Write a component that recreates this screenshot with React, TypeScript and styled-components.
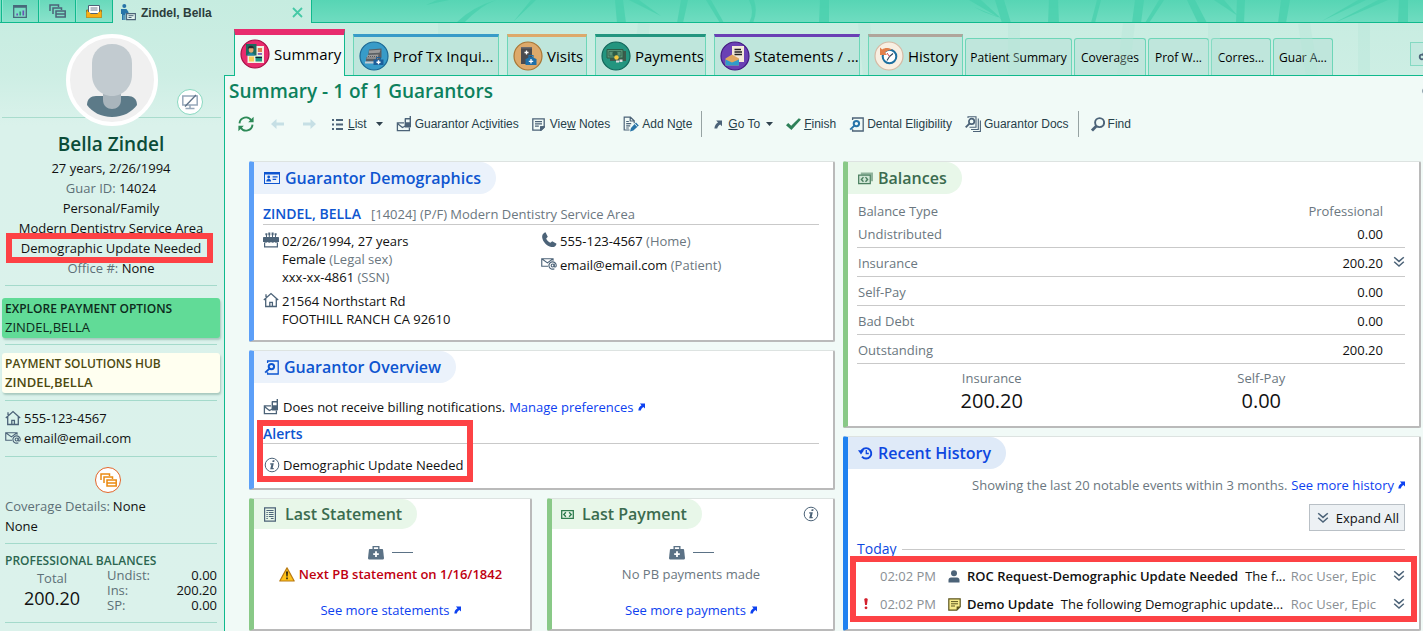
import React from "react";
import styled, { createGlobalStyle } from "styled-components";

const sans = `"Open Sans", "Noto Sans", sans-serif`;
const slate = "#4c6378";

const GlobalStyle = createGlobalStyle`
  *, *::before, *::after { box-sizing: border-box; }
  body { margin: 0; font-family: ${sans}; font-size: 13px; line-height: 18px; color: #111; overflow-x: hidden; background: #dbf2eb; }
  button { font: inherit; color: inherit; background: none; border: 0; padding: 0; margin: 0; cursor: pointer; }
  a { color: #0d41f0; text-decoration: none; }
  h1, h2, h3, p, ul, dl, dd { margin: 0; padding: 0; }
  ul { list-style: none; }
  svg { display: block; flex: none; }
`;

/* ---------- shell ---------- */

const Shell = styled.div`
  display: flex;
  flex-direction: column;
  min-height: 100vh;
  position: relative;
  isolation: isolate;
  overflow: hidden;
  background: linear-gradient(#c6ece0 0, #cdeee4 75px, #daf2eb 125px, #dbf2eb 100%);
`;

const TopBar = styled.header`
  display: flex;
  height: 23px;
`;

const AppTab = styled.button`
  width: 37px;
  height: 23px;
  display: flex;
  align-items: center;
  justify-content: center;
  background: linear-gradient(#68d9bb, #8ae2cb);
  border-right: 1px solid #10b98d;
  border-bottom: 1px solid #10b98d;
  box-shadow: inset 1px 0 0 #8fe6d0;
`;

const EdgeSliver = styled.div`
  width: 2px;
  background: #79ddc2;
  border-right: 1px solid #10b98d;
  border-bottom: 1px solid #10b98d;
`;

const PersonTab = styled.div`
  width: 198px;
  display: flex;
  align-items: center;
  gap: 5px;
  padding: 2px 8px 0 8px;
  font-family: "Liberation Sans", Arial, sans-serif;
  font-size: 12px;
  font-weight: bold;
  color: #2c3d3c;
`;

const CloseButton = styled.button`
  margin-left: auto;
`;

const TopFill = styled.div`
  flex: 1;
  position: relative;
  overflow: hidden;
  background: linear-gradient(#57d5b4, #6fdcc0);
  border-left: 1px solid #10b98d;
  border-bottom: 1px solid #10b98d;
`;

const Art = styled.svg`
  position: absolute;
  top: 0;
  right: 0;
`;

const Body = styled.div`
  flex: 1;
  display: flex;
`;

/* ---------- sidebar ---------- */

const Sidebar = styled.aside`
  width: 224px;
  flex: none;
  padding: 11px 7px 8px 5px;
`;

const AvatarRow = styled.div`
  position: relative;
  display: flex;
  justify-content: center;
  margin: 0 -4px 4px -3px;
  &::before {
    content: "";
    position: absolute;
    left: 0;
    right: 0;
    top: 83px;
    border-top: 1px solid #a9dccd;
  }
`;

const Avatar = styled.div`
  position: relative;
  width: 92px;
  height: 92px;
  border-radius: 50%;
  border: 4px solid #fff;
  background: #f0f0f0;
  overflow: hidden;
`;

const NoPhoto = styled.button`
  position: absolute;
  right: 18px;
  top: 55px;
  width: 26px;
  height: 26px;
  border-radius: 50%;
  border: 1px solid #8ad9c1;
  background: #fff;
  display: flex;
  align-items: center;
  justify-content: center;
`;

const PersonName = styled.h1`
  font-size: 19px;
  line-height: 28px;
  font-weight: 600;
  text-align: center;
  color: #0b4c38;
`;

const PersonFacts = styled.div`
  text-align: center;
  line-height: 20px;
  white-space: nowrap;
`;

const Muted = styled.span`
  color: #5d7077;
`;

const Divider = styled.hr<{ $top: number; $bottom: number }>`
  border: 0;
  border-top: 1px solid #a4dacb;
  margin: ${(p) => p.$top}px 0 ${(p) => p.$bottom}px;
`;

const ActionTile = styled.button<{ $tone: "green" | "cream" }>`
  display: block;
  width: calc(100% + 6px);
  margin: 0 -3px;
  padding: 1px 3px;
  text-align: left;
  line-height: 19px;
  border-radius: 3px;
  background: ${(p) => (p.$tone === "green" ? "#61db97" : "#fffff0")};
  color: ${(p) => (p.$tone === "green" ? "#0d2a1c" : "#4d4a10")};
  box-shadow: 1px 2px 2px #a9c9bf;
  font-size: 13px;
  font-weight: ${(p) => (p.$tone === "green" ? 400 : 600)};
`;

const TileCaption = styled.span`
  display: block;
  font-size: 12px;
  font-weight: 600;
`;

const ContactRow = styled.div`
  display: flex;
  align-items: center;
  gap: 3px;
  line-height: 20px;
`;

const CoverageBadge = styled.div`
  width: 26px;
  height: 26px;
  margin: 0 0 3px 90px;
  border: 1px solid #e2662a;
  border-radius: 50%;
  background: #fff;
  display: flex;
  align-items: center;
  justify-content: center;
`;

const SideHeading = styled.h2`
  font-size: 12px;
  line-height: 14px;
  font-weight: 600;
  color: #2b6650;
`;

const SideBalances = styled.div`
  display: flex;
  gap: 8px;
`;

const SideTotal = styled.div`
  width: 94px;
  text-align: center;
  line-height: 20px;
  color: #5d7077;
  strong { display: block; font-size: 18px; font-weight: 400; color: #111; }
`;

const SideLines = styled.dl`
  flex: 1;
  display: grid;
  grid-template-columns: auto auto;
  justify-content: space-between;
  line-height: 15px;
  dt { color: #5d7077; }
  dd { text-align: right; }
`;

/* ---------- main ---------- */

const Main = styled.main`
  flex: 1;
  min-width: 0;
  display: flex;
  flex-direction: column;
`;

const TabStrip = styled.nav`
  position: relative;
  display: flex;
  align-items: flex-end;
  height: 53px;
  padding-left: 10px;
  &::after {
    content: "";
    position: absolute;
    left: 0;
    right: 0;
    bottom: 0;
    border-bottom: 1px solid #10b98d;
  }
`;

const BigTab = styled.button<{ $color: string; $width: number; $active?: boolean }>`
  position: relative;
  z-index: ${(p) => (p.$active ? 1 : 0)};
  flex: none;
  width: ${(p) => p.$width}px;
  height: ${(p) => (p.$active ? 47 : 42)}px;
  padding: ${(p) => (p.$active ? "0 0 3px" : "2px 0 3px")};
  padding-left: 5px;
  display: flex;
  align-items: center;
  gap: 4px;
  white-space: nowrap;
  font-size: 15px;
  font-weight: 500;
  color: #000;
  background: ${(p) => (p.$active ? "#f1faf7" : "#bfe6dc")};
  border: 1px solid ${(p) => (p.$active ? "#10b98d" : "#6dd6b8")};
  border-bottom: 0;
  border-top: ${(p) => (p.$active ? 6 : 3)}px solid ${(p) => p.$color};
`;

const BigTabs = styled.div`
  display: flex;
  align-items: flex-end;
  gap: 8px;
`;

const SmallTabs = styled.div`
  display: flex;
  gap: 2px;
  padding-left: 2px;
`;

const SmallTab = styled.button<{ $width: number }>`
  flex: none;
  width: ${(p) => p.$width}px;
  height: 38px;
  white-space: nowrap;
  font-size: 12px;
  color: #000;
  background: #bfe6dc;
  border: 1px solid #6dd6b8;
  border-bottom: 0;
  border-radius: 3px 3px 0 0;
`;

const TabSpacer = styled.div`
  flex: 1;
`;

const ToolTab = styled.button`
  flex: none;
  width: 24px;
  height: 24px;
  margin-right: -11px;
  margin-bottom: 10px;
  padding-left: 7px;
  border: 1px solid #84d9c2;
  background: #c3e9df;
`;

const Page = styled.section`
  flex: 1;
  display: flex;
  flex-direction: column;
  border-left: 1px solid #10b98d;
  background: #f1faf7;
`;

const PageHead = styled.div`
  display: flex;
  align-items: center;
  justify-content: space-between;
  padding: 0 0 0 4px;
  margin-right: -11px;
  height: 30px;
`;

const PageTitle = styled.h1`
  font-size: 19px;
  line-height: 28px;
  font-weight: 600;
  color: #0d815d;
`;

const Toolbar = styled.div`
  display: flex;
  align-items: center;
  height: 36px;
  padding-left: 11px;
  gap: 13px;
  font-family: "Liberation Sans", Arial, sans-serif;
  font-size: 12px;
  color: #27404a;
  white-space: nowrap;
`;

const ToolButton = styled.button<{ $gap?: number }>`
  display: flex;
  align-items: center;
  gap: ${(p) => p.$gap ?? 3}px;
  height: 26px;
`;

const ListLabel = styled.span`
  margin-right: 4px;
`;

const ToolIcon = styled.button`
  width: 19px;
  height: 26px;
  display: flex;
  align-items: center;
  justify-content: center;
`;

const ToolRule = styled.span`
  width: 1px;
  height: 26px;
  margin: 0 -1px 0 -4px;
  background: #97a3a3;
`;

const Columns = styled.div`
  display: grid;
  grid-template-columns: 586fr 578fr;
  gap: 8px;
  flex: 1;
  padding: 19px 2px 0 24px;
`;

const Column = styled.div`
  display: flex;
  flex-direction: column;
  gap: 8px;
  min-width: 0;
`;

type Tone = "blue" | "green" | "royal";
const tones: Record<Tone, { edge: string; pill: string; text: string }> = {
  blue: { edge: "#5c9ff8", pill: "#ebf2fb", text: "#0e55d0" },
  green: { edge: "#89c987", pill: "#e8f7e9", text: "#3b6b4f" },
  royal: { edge: "#1f82f0", pill: "#dfeaf8", text: "#0d47e0" },
};

const Card = styled.section<{ $tone: Tone; $grow?: boolean }>`
  flex: ${(p) => (p.$grow ? 1 : "none")};
  min-width: 0;
  background: #fff;
  border: 1px solid #dde3e1;
  border-left: 5px solid ${(p) => tones[p.$tone].edge};
  border-right: 2px solid #bababa;
  border-bottom: 2px solid #bababa;
  border-radius: 2px;
`;

const CardHead = styled.div`
  display: flex;
  align-items: center;
  justify-content: space-between;
  padding-right: 14px;
`;

const CardTitle = styled.h2<{ $tone: Tone; $compact?: boolean }>`
  display: flex;
  align-items: center;
  gap: ${(p) => (p.$compact ? 8 : 5)}px;
  height: ${(p) => (p.$compact ? 30 : 32)}px;
  padding: 0 15px 0 ${(p) => (p.$compact ? 9 : 10)}px;
  border-radius: 0 16px 16px 0;
  background: ${(p) => tones[p.$tone].pill};
  color: ${(p) => tones[p.$tone].text};
  font-size: 16px;
  line-height: 24px;
  font-weight: 600;
  white-space: nowrap;
`;

const CardBody = styled.div<{ $bottom: number }>`
  padding: 0 14px ${(p) => p.$bottom}px 9px;
`;

const Grey = styled.span`
  color: #6b7780;
`;

const AccountLine = styled.div`
  display: flex;
  align-items: baseline;
  gap: 10px;
  margin-top: 10px;
  line-height: 19px;
  border-bottom: 1px solid #c9c9c9;
  strong { font-size: 14px; font-weight: 600; color: #0e55d0; }
`;

const FactGrid = styled.div`
  display: grid;
  grid-template-columns: 1fr 1fr;
  margin-top: 7px;
`;

const FactList = styled.div`
  display: flex;
  flex-direction: column;
  gap: 6px;
`;

const Fact = styled.div`
  display: flex;
  gap: 3px;
`;

const Preference = styled.p`
  display: flex;
  align-items: center;
  gap: 4px;
  margin-top: 15px;
`;

const JumpLink = styled.a`
  display: inline-flex;
  align-items: center;
  gap: 4px;
  white-space: nowrap;
`;

const AlertsBlock = styled.div`
  position: relative;
  margin-top: 9px;
`;

const AlertsTitle = styled.h3`
  font-size: 14px;
  line-height: 18px;
  font-weight: 600;
  color: #0e55d0;
  border-bottom: 1px solid #c9c9c9;
`;

const AlertItem = styled.p`
  display: flex;
  align-items: center;
  gap: 3px;
  margin-top: 12px;
  padding-left: 1px;
`;

/* Red attention frame laid over the content it surrounds */
const Callout = styled.span<{ $inset: string; $width?: string }>`
  position: absolute;
  inset: ${(p) => p.$inset};
  width: ${(p) => p.$width ?? "auto"};
  border: 6px solid #fd4245;
  pointer-events: none;
`;

const Flagged = styled.div`
  position: relative;
`;

const Pair = styled.div`
  display: grid;
  grid-template-columns: 283fr 288fr;
  gap: 15px;
  flex: 1;
`;

const Centered = styled.div`
  display: flex;
  flex-direction: column;
  align-items: center;
  padding: 14px 12px 7px 9px;
`;

const BagLine = styled.div`
  display: flex;
  align-items: center;
  gap: 8px;
  height: 18px;
  margin-bottom: 4px;
  &::after { content: ""; width: 21px; border-top: 1px solid #5b7286; }
`;

const StatusLine = styled.p<{ $warn?: boolean }>`
  display: flex;
  align-items: center;
  gap: 4px;
  margin-bottom: 18px;
  white-space: nowrap;
  font-weight: ${(p) => (p.$warn ? 600 : 400)};
  color: ${(p) => (p.$warn ? "#c00010" : "#6b7780")};
`;

const BalanceTable = styled.table`
  width: 100%;
  margin-top: 5px;
  border-collapse: collapse;
  line-height: 18px;
  th, td { padding: 6px 0 4px; font-weight: 400; text-align: left; color: #6b7780; }
  tbody th { padding-left: 1px; }
  thead th { padding: 3px 0 2px 1px; }
  tbody tr { border-bottom: 1px solid #c9c9c9; }
  tbody tr:first-child th, tbody tr:first-child td { padding-top: 3px; }
  tbody td { color: #111; }
  th:nth-child(2), td:nth-child(2) { text-align: right; }
  th:nth-child(3), td:nth-child(3) { width: 22px; padding-left: 10px; }
`;

const Totals = styled.dl`
  display: grid;
  grid-template-columns: 1fr 1fr;
  padding: 5px 9px 11px 0;
  text-align: center;
  dt { color: #6b7780; }
  dd { font-size: 20px; line-height: 28px; }
`;

const HistoryNote = styled.p`
  display: flex;
  justify-content: flex-end;
  gap: 4px;
  margin-top: 7px;
  white-space: nowrap;
`;

const ExpandRow = styled.div`
  display: flex;
  justify-content: flex-end;
  margin-top: 10px;
`;

const ExpandButton = styled.button`
  display: flex;
  align-items: center;
  gap: 7px;
  height: 27px;
  padding: 0 5px 0 7px;
  border: 1px solid #b9c0c6;
  background: #edf1f4;
`;

const DayHeading = styled.h3`
  display: flex;
  align-items: center;
  gap: 5px;
  margin-top: 8px;
  font-size: 14px;
  line-height: 20px;
  font-weight: 400;
  color: #0d47e0;
  &::after { content: ""; flex: 1; border-top: 1px solid #c9c9c9; }
`;

const EventList = styled.ul`
  position: relative;
  margin-top: 3px;
`;

const EventRow = styled.li`
  display: flex;
  align-items: center;
  height: 28px;
  white-space: nowrap;
`;

const EventFlag = styled.span`
  width: 23px;
  padding-left: 6px;
`;

const EventTime = styled.time`
  width: 68px;
  color: #8a8f94;
`;

const EventIcon = styled.span`
  width: 19px;
`;

const EventTitle = styled.strong`
  font-weight: 600;
  margin-right: 7px;
`;

const EventDetail = styled.span`
  flex: 1;
`;

const EventUser = styled.span`
  margin-right: 17px;
  color: #8a8f94;
`;

/* ---------- icons ---------- */

type IconColor = { color?: string };

const HouseIcon = () => (
  <svg width="16" height="16" viewBox="0 0 16 16" fill="none" stroke={slate} strokeWidth="1.3">
    <path d="M.8 8 8 1.6 15.2 8M2.7 6.5v8h10.6v-8M3 5V2.2M6.8 14.5v-4.2h2.6v4.2" />
  </svg>
);

const MailAtIcon = () => (
  <svg width="16" height="16" viewBox="0 0 17 16" fill="none" stroke={slate} strokeWidth="1.2">
    <path d="M7.5 10.4H.8v-8h12v2.2M.8 2.5l6 4.3 6-4.3" />
    <circle cx="12.4" cy="9.6" r="1.6" />
    <path d="M14 7.8v2.4c0 1.6 2.2 1.3 2.2-.6a3.9 3.9 0 1 0-2 3.4" />
  </svg>
);

const CakeIcon = () => (
  <svg width="16" height="16" viewBox="0 0 16 16" fill={slate}>
    <path d="M2.4 1.2h2v2h-2zM5.3.6h2v2.6h-2zM8.6.6h2v2.6h-2zM11.6 1.2h2v2h-2zM3 3.2h1v2.3H3zM5.8 3.2h1v2.3h-1zM9 3.2h1v2.3H9zM12 3.2h1v2.3h-1zM0 6c0-.6.4-1 1-1h14c.6 0 1 .4 1 1v4h-1.4c-1 1-2.2 1-3.2 0-1 1-2.4 1-3.4 0-1 1-2.4 1-3.4 0-1 1-2.3 1-3.2 0H0z" />
    <path d="M1.6 10.5v4.3h12.8v-4.3" fill="none" stroke={slate} strokeWidth="1.2" />
  </svg>
);

const PhoneIcon = () => (
  <svg width="16" height="16" viewBox="0 0 16 16">
    <path fill={slate} d="M4.6.6 6.8 4.8 5.2 6.6c.8 2 2.2 3.4 4.2 4.2l1.8-1.600 4 2.200c.3.2.3.5.2.8-.7 2.200-2.800 3.200-5 2.800C5.600 14.200 1.800 9.800 1.200 5.600.9 3.400 1.800 1.300 3.800.4c.3-.1.6-.1.8.2z" />
  </svg>
);

const IdCardIcon = () => (
  <svg width="16" height="12" viewBox="0 0 16 12">
    <path fill="#0e55d0" fillRule="evenodd" d="M0 0h16v12H0zM1 2.6v8.3h14V2.6z" />
    <circle cx="4.7" cy="5" r="1.4" fill="#0e55d0" />
    <path fill="#0e55d0" d="M2.3 9.5c0-3.6 4.8-3.6 4.8 0zM8.6 4.2h5v1.2h-5zM8.6 6.8h3.6V8H8.6z" />
  </svg>
);

const DocSearchIcon = ({ color = slate, lens = color }: IconColor & { lens?: string }) => (
  <svg width="15" height="15" viewBox="0 0 15 15" fill="none">
    <path d="M3.6 3V1h10.6v13H3.6v-1.8" stroke={color} strokeWidth="1.3" />
    <circle cx="7.4" cy="6.6" r="2.7" stroke={lens} strokeWidth="2" />
    <path d="M5.4 8.6 1.2 12.6" stroke={lens} strokeWidth="2" />
  </svg>
);

const NotifyIcon = () => (
  <svg width="16" height="16" viewBox="0 0 16 16" fill="none">
    <path d="M8 6.8H1.4v7.8h12v-3M1.4 7.6l5 4 3-1.6" stroke={slate} strokeWidth="1.3" />
    <path fill={slate} d="M13.6 0H15v10.4c0 .6-.4 1-1 1H9.6c-.6 0-1-.4-1-1V3c0-.6.4-1 1-1h4zM10 3.4v2.8h3.6V3.4z" fillRule="evenodd" />
  </svg>
);

const InfoIcon = () => (
  <svg width="16" height="16" viewBox="0 0 16 16" fill="none">
    <circle cx="8" cy="8" r="6.8" stroke={slate} strokeWidth="1" />
    <path d="M8.7 3.2h1.9l-.4 1.8H8.3zM6.3 6.2h3.5l-1.1 4.9h1.1l-.2 1.2H6.2l1.2-4.9H6z" fill={slate} />
  </svg>
);

const JumpIcon = ({ color = "#0d41f0", size = 7 }: IconColor & { size?: number }) => (
  <svg width={size} height={size + 1} viewBox="0 0 8 9">
    <path fill={color} d="M2.2.6H8v5.6L6.2 4.5C4.6 5.4 3.7 6.6 3.2 8.6H.4C.5 5.6 1.9 3.6 4 2.4z" />
  </svg>
);

const ChevronsIcon = () => (
  <svg width="12" height="12" viewBox="0 0 12 12" fill="none" stroke={slate} strokeWidth="1.5">
    <path d="M1.2 1.2 6 5.4l4.8-4.2M1.2 5.8 6 10l4.8-4.2" />
  </svg>
);

const StatementIcon = () => (
  <svg width="14" height="15" viewBox="0 0 14 15" fill="none">
    <path d="M1.6.8h10.8v13.4H1.6z" stroke={slate} strokeWidth="1.2" />
    <path d="M3.4 3.5h7.2M3.4 5.5h1.4m1 0h4.8M3.4 7.5h1.4m1 0h4.8M3.4 9.5h1.4m1 0h4.8M3.4 11.5h1.4m3 0h2.8" stroke={slate} />
  </svg>
);

const CashIcon = () => (
  <svg width="13" height="9" viewBox="0 0 13 9" fill="none">
    <path d="M.7.7h11.6v7.6H.7z" stroke="#2f7d50" strokeWidth="1.3" />
    <path d="M4.9 2.3 2.8 4.5l2.1 2.2M8.1 2.3l2.1 2.2-2.1 2.2" stroke="#2f7d50" strokeWidth="1.4" />
  </svg>
);

const CashStackIcon = () => (
  <svg width="15" height="13" viewBox="0 0 16 13" fill="none">
    <path d="M3 0h13v9.5h-2.2V2.4H3z" fill="#8fb39c" />
    <path d="M.7 3h12.4v9H.7z" fill="#cfe6d5" stroke="#4b7f60" strokeWidth="1.3" />
    <path d="M5.8 5 3.6 7.5 5.8 10M8 5l2.2 2.5L8 10" stroke="#4b7f60" strokeWidth="1.5" />
  </svg>
);

const BagIcon = () => (
  <svg width="16" height="15" viewBox="0 0 16 15">
    <path d="M5.2 4.5V1.6h5.6v2.9" fill="none" stroke="#5b7286" strokeWidth="1.4" />
    <path d="M2 4h12c.7 0 1 .4 1.1 1L16 13c0 .8-.4 1.4-1 1.4H1C.4 14.4 0 13.8 0 13l.9-8C1 4.4 1.3 4 2 4z" fill="#5b7286" />
    <path d="M8 6.3v5.6M5.2 9.1h5.6" stroke="#fff" strokeWidth="1.8" />
  </svg>
);

const WarningIcon = () => (
  <svg width="16" height="15" viewBox="0 0 16 15">
    <path d="M8 .9 15.2 14H.8z" fill="#ffc21a" stroke="#b97a12" strokeWidth="1.2" strokeLinejoin="round" />
    <path d="M7 4.5h2l-.4 5H7.4zM7.2 10.5h1.6v1.7H7.2z" fill="#2b2410" />
  </svg>
);

const HistoryIcon = () => (
  <svg width="15" height="14" viewBox="0 0 15 14" fill="none" stroke="#0d47e0">
    <path d="M3 6.2A5.2 5.2 0 1 1 4 10.6" strokeWidth="1.9" />
    <path d="M0 4.2h6L3 8.4z" fill="#0d47e0" stroke="none" />
    <path d="M8.3 4v3.5h2.5" strokeWidth="1.3" />
  </svg>
);

const PersonIcon = () => (
  <svg width="12" height="13" viewBox="0 0 12 13" fill={slate}>
    <circle cx="6" cy="3.3" r="3" />
    <path d="M.5 12.6V10c0-1.5 1-2.6 2.5-2.6h6c1.5 0 2.5 1.1 2.5 2.6v2.6z" />
  </svg>
);

const StickyIcon = () => (
  <svg width="13" height="13" viewBox="0 0 13 13" fill="none">
    <path d="M.8.8h11.4v8L8.8 12.2h-8z" fill="#f8ec8d" stroke="#5c5620" strokeWidth="1.2" />
    <path d="M12.2 8.6H8.6v3.6z" fill="#5c5620" />
    <path d="M3 3.6h7M3 5.8h7M3 8h4" stroke="#5c5620" />
  </svg>
);

const ExclaimIcon = () => (
  <svg width="6" height="12" viewBox="0 0 6 12" fill="#d31f2c">
    <path d="M1.3 1.5c0-1.7 3.4-1.7 3.4 0L3.9 7H2.1z" />
    <circle cx="3" cy="9.8" r="1.4" />
  </svg>
);

const RefreshIcon = () => (
  <svg width="16" height="16" viewBox="0 0 16 16" fill="none" stroke="#2d8a57" strokeWidth="1.9">
    <path d="M1.5 7.4A6.4 6.4 0 0 1 13.4 4.6M14.5 8.6A6.4 6.4 0 0 1 2.6 11.4" />
    <path d="M15.6.8v5.4h-5.4zM.4 15.2V9.8h5.4z" fill="#2d8a57" stroke="none" />
  </svg>
);

const ArrowIcon = ({ flip }: { flip?: boolean }) => (
  <svg width="13" height="10" viewBox="0 0 13 10">
    <path d={flip ? "M13 5 7.5 0v3.4H0v3.2h7.5V10z" : "M0 5 5.5 0v3.4H13v3.2H5.5V10z"} fill="#c6dfe5" />
  </svg>
);

const ListIcon = () => (
  <svg width="11" height="11" viewBox="0 0 11 11" fill={slate}>
    <path d="M0 0h2v2H0zM4 0h7v2H4zM0 4.5h2v2H0zM4 4.5h7v2H4zM0 9h2v2H0zM4 9h7v2H4z" />
  </svg>
);

const CaretIcon = () => (
  <svg width="7" height="4" viewBox="0 0 7 4">
    <path d="M0 0h7L3.5 4z" fill="#30424e" />
  </svg>
);

const NoteIcon = () => (
  <svg width="13" height="13" viewBox="0 0 13 13" fill="none" stroke={slate} strokeWidth="1.3">
    <path d="M.8.8h11.4v8.4l-3 3H.8zM12 8.8H8.8V12M3 3.6h7M3 5.9h7M3 8.2h3.8" />
    <path d="M12.2 8.8H8.8v3.4z" fill={slate} />
  </svg>
);

const AddNoteIcon = () => (
  <svg width="16" height="16" viewBox="0 0 16 16" fill="none">
    <path d="M6.5 14H1.2V1.2h6.2l3.8 3.6v2.4M7.2 1.4V5h3.8M3.2 5.5h2.6M3.2 7.7h5M3.2 9.9h4M3.2 12h2.6" stroke={slate} strokeWidth="1.2" />
    <path d="M13 6.6 15.8 9.4 10.4 14.6 7 15.6 8 12z" fill="#2874a8" />
    <path d="m11.6 7.8 2.9 2.9" stroke="#f1faf7" />
  </svg>
);

const CheckIcon = () => (
  <svg width="15" height="12" viewBox="0 0 15 12">
    <path d="M0 7.2 2.2 5 5.2 7.8 12.8.2 15 1.6 5.4 12z" fill="#2d8058" />
  </svg>
);

const DocsIcon = () => (
  <svg width="16" height="16" viewBox="0 0 16 16" fill="none" stroke={slate}>
    <path d="M3 2V.8h8v10.4H4.5M13.3 2.5v11H6M15.4 4.5v11H8" strokeWidth="1.1" />
    <circle cx="6.6" cy="5.4" r="2.7" strokeWidth="1.7" />
    <path d="M4.7 7.3.7 11.3" strokeWidth="1.9" />
  </svg>
);

const FindIcon = () => (
  <svg width="14" height="15" viewBox="0 0 14 15" fill="none" stroke={slate}>
    <circle cx="8.6" cy="5.6" r="4.5" strokeWidth="1.9" />
    <path d="M5.4 9 1 13.6" strokeWidth="2.8" />
  </svg>
);

const CopiesIcon = ({ color = slate }: IconColor) => (
  <svg width="17" height="14" viewBox="0 0 17 14" fill="none" stroke={color} strokeWidth="1.5">
    <path d="M1 7V1h8.5v2M4 10V4h8.5v2M7 7h9.2v6H7zM7 9.900h9" />
  </svg>
);

const ChartIcon = () => (
  <svg width="14" height="13" viewBox="0 0 14 13" fill="none">
    <path d="M.7.7h12.6v11.6H.7zM.7 2h12.6" stroke="#47687a" strokeWidth="1.3" />
    <path d="M4.2 8.5v2M10.3 5.5v5" stroke="#6b52b5" strokeWidth="1.7" />
    <path d="M7.2 6.5v4" stroke="#2e9d74" strokeWidth="1.7" />
  </svg>
);

const InboxIcon = () => (
  <svg width="16" height="13" viewBox="0 0 16 13">
    <path d="M.5 5h15v7.5H.5z" fill="#f3a712" stroke="#7f6a2a" strokeWidth=".8" />
    <path d="M2.5.5h11v8h-11z" fill="#fff" stroke="#4f6278" />
    <path d="M4.5 3h7M4.5 5h7" stroke="#6c7c8e" />
    <path d="M.5 7h3c.5 1.5 1 2 2 2h5c1 0 1.5-.5 2-2h3v5.5H.5z" fill="#f9ae14" />
  </svg>
);

const GuarantorIcon = () => (
  <svg width="15" height="17" viewBox="0 0 15 17">
    <circle cx="3.3" cy="2" r="2" fill="#2874a8" />
    <path d="M0 5h5.5l2 3v1.5h-3V16H3.3v-5h-.6v5H1V10H0z" fill="#2874a8" />
    <path d="M5.6 9.6h8.8v6H5.6z" fill="#e3f4ef" stroke={slate} strokeWidth="1.1" />
    <path d="M7.5 11.7h5M7.5 13.5h3" stroke={slate} />
  </svg>
);

const AvatarArt = () => (
  <svg width="84" height="84" viewBox="0 0 84 84">
    <path d="M17 67c0-6 4-9 9-9h32c5 0 9 3 9 9-5 7-14 12-25 12s-20-5-25-12z" fill="#5c7a88" />
    <path d="M33 52h18v10c0 12-18 12-18 0z" fill="#a9b5bc" />
    <path d="M42 6c12 0 20 8 20 19v12c0 11-8 21-20 21S22 48 22 37V25C22 14 30 6 42 6z" fill="#c2cbd0" />
  </svg>
);

const NoMonitorIcon = () => (
  <svg width="16" height="16" viewBox="0 0 16 16" fill="none" stroke="#97a8ba" strokeWidth="1.5">
    <path d="M.8 2h14.4v9H.8zM8 11v3M3.5 14.5h9" />
    <path d="M14 1 3 12.5" stroke="#5f7288" strokeWidth="1.3" />
  </svg>
);

const WrenchIcon = () => (
  <svg width="14" height="16" viewBox="0 0 14 16" fill="none" stroke={slate} strokeWidth="1.8">
    <circle cx="4" cy="11" r="2.300" />
    <path d="M5 8.500 8 3" />
  </svg>
);

const MoreIcon = () => (
  <svg width="12" height="12" viewBox="0 0 12 12" fill="none" stroke={slate} strokeWidth="1.2">
    <circle cx="6" cy="6" r="5" />
  </svg>
);

const Disc = ({ fill, ring, children }: { fill: string; ring: string; children: React.ReactNode }) => (
  <svg width="30" height="30" viewBox="0 0 30 30">
    <circle cx="15" cy="15" r="14" fill={fill} stroke={ring} strokeWidth="1.2" />
    {children}
  </svg>
);

const SummaryDisc = () => (
  <Disc fill="#e82c6e" ring="#a80f46">
    <path d="M16 7h8v17H7.5v-8H16z" fill="#f4efe2" />
    <path d="M6 5h10.5v11.5H6z" fill="#1c6a5e" />
    <path d="M8 10c-.5-4.5 6.5-4.5 6 0z" fill="#2a2a2e" />
    <path d="M8.8 9.3h4.6v2.5c0 2.5-4.6 2.5-4.6 0z" fill="#e3a872" />
    <path d="M7.2 16.5c0-3.5 7.6-3.5 7.6 0z" fill="#1e86a3" />
    <path d="M17.8 9H22v4h-4.2z" fill="#e07c50" />
    <path d="M17.8 14.2H22v1.5h-4.2z" fill="#6a3fb0" />
    <path d="M9 17.5h5v5H9z" fill="#f6cf57" />
    <path d="M15.5 17.5H22v5h-6.5z" fill="#1d9b84" />
    <path d="M15.5 18.5H22" stroke="#123" strokeWidth="1.2" />
  </Disc>
);

const InquiryDisc = () => (
  <Disc fill="#389bc8" ring="#1b6793">
    <path d="M10 8.5 22.5 7.5v9l-2 4H7v-3.5l2-2z" fill="#5a5f63" />
    <path d="m10 9.5 11.5-.8-1 3-10.5.6zM8.5 14l11-.5-1 4.5H7.500z" fill="#9b9b9b" />
    <path d="M9 15.5h9M8.5 17h9" stroke="#55595c" strokeDasharray="1 1" />
    <path d="M6 20.5h10v2H6z" fill="#c6cbd0" />
    <path d="M14.5 18.5h10v5.5h-10z" fill="#1c5f9b" />
    <path d="M19.5 19.3v4M17.5 21.3h4" stroke="#fff" strokeWidth="1.4" />
    <path d="M17.5 18.5v-2h4v2" stroke="#1c5f9b" fill="none" />
  </Disc>
);

const VisitsDisc = () => (
  <Disc fill="#dda96b" ring="#a87635">
    <path d="M8 6h11v17H8z" fill="#4b4b4f" />
    <path d="M8 6h11v1.5H8z" fill="#6a6a6e" />
    <path d="M13.5 9.5v4M11.5 11.5h4" stroke="#fff" strokeWidth="1.3" />
    <path d="M12.5 18c2-.5 3-1.5 3.500-2h4c.5.5 1.500 1.500 3.500 2v6h-11z" fill="#1f6fa8" />
    <path d="M18 18v4.5M15.8 20.3h4.4" stroke="#fff" strokeWidth="1.3" />
    <path d="M16 16.5v-2h4v2" stroke="#1f6fa8" fill="none" strokeWidth="1.2" />
  </Disc>
);

const PaymentsDisc = () => (
  <Disc fill="#23957f" ring="#12665a">
    <path d="M9 10h16v10H9z" fill="#3c5a4b" />
    <path d="M6 8.5h16v8.5H6z" fill="#5a9377" stroke="#2d5c47" />
    <path d="M8 10.5h12v4.5H8z" fill="none" stroke="#2d5c47" strokeWidth=".7" />
    <circle cx="14" cy="12.7" r="2.6" fill="#2d5c47" />
    <path d="M15 19.5h3v2h-3zM18.5 18.5h3v2.5h-3z" fill="#dcdcdc" />
    <circle cx="15.5" cy="16.5" r="2.2" fill="#f5c93d" />
  </Disc>
);

const StatementsDisc = () => (
  <Disc fill="#6a40b4" ring="#41197f">
    <path d="M12 5h12v16H12z" fill="#f3ead9" />
    <path d="M14.5 8.5H21M14.5 11H22M14.5 13.5H22" stroke="#222" strokeWidth="1.3" />
    <path d="M5.5 17.5 12 13.5l7 4v7H5.5z" fill="#e0a660" />
    <path d="m5.5 18.5 6.5 3 7-3v6H5.500z" fill="#2f9ccb" />
  </Disc>
);

const HistoryDisc = () => (
  <Disc fill="#f8efe2" ring="#d5b9a4">
    <circle cx="15.5" cy="15.5" r="6.8" fill="#fff" stroke="#1d6f9f" strokeWidth="2" />
    <path d="M15.5 15.5l3.5-3M15.5 15.5l-2.500 4" stroke="#33475a" strokeWidth="1.1" />
    <path d="m15.5 15.5-2.5-3.5" stroke="#d23c4b" />
    <path d="M6 6.5V14h7l-2-2.500c2-2 4.500-2.500 7-2.500C15 6.500 11 6.500 8.200 8.600z" fill="#e2804b" />
  </Disc>
);

/* Bamboo stalks and leaves behind the window tabs */
const BambooArt = () => (
  <Art width="1112" height="23" viewBox="0 0 1112 23" fill="#48d0ad" opacity=".75" aria-hidden="true">
    <path d="M304 0h8l3 23h-9zM370 0h7l-5 23h-6zM509 0h9v23h-10zM684 0h9l7 23h-9zM738 0h9l1 23h-11zM824 0h9l-3 23h-9zM876 0h8l12 23h-9zM926 0h8l-1 23h-8zM970 0h9l-4 23h-8zM1088 0h9v23h-10z" />
    <path d="M115 5 138 0h-12zM145 23q16-16 40-23-16 6-32 23zM203 21 225 0h-5zM318 0l32 16-22-16zM395 0l14 23h4L400 0zM438 0q6 12 0 23h4q5-12 1-23zM658 0l34 20-22-20zM663 7l34 14-24-9zM786 0l-6 23h4l6-23zM848 0l-14 23h4l15-23zM1011 21l44-21h-8zM1023 23l54-23h-10zM903 0l24 16-14-16z" />
  </Art>
);

const StripArt = () => (
  <Art width="1199" height="52" viewBox="0 0 1199 52" fill="none" stroke="#b5e6d8" opacity=".35" aria-hidden="true">
    <path strokeWidth="12" d="M220 0v52M420 0l-6 52M640 0l5 52M790 0v52M905 0l-6 52M990 0v52M1080 0l8 52M1140 0v52" />
  </Art>
);

/* ---------- data ---------- */

const bigTabs = [
  { label: "Summary", color: "#e82c6e", width: 111, icon: <SummaryDisc />, active: true },
  { label: "Prof Tx Inqui...", color: "#389bc8", width: 146, icon: <InquiryDisc /> },
  { label: "Visits", color: "#dda96b", width: 80, icon: <VisitsDisc /> },
  { label: "Payments", color: "#23957f", width: 111, icon: <PaymentsDisc /> },
  { label: "Statements / ...", color: "#6a40b4", width: 146, icon: <StatementsDisc /> },
  { label: "History", color: "#b0a59b", width: 95, icon: <HistoryDisc /> },
];

const smallTabs = [
  { label: "Patient Summary", width: 107 },
  { label: "Coverages", width: 72 },
  { label: "Prof W...", width: 61 },
  { label: "Corres...", width: 60 },
  { label: "Guar A...", width: 60 },
];

const balances = [
  { label: "Undistributed", amount: "0.00" },
  { label: "Insurance", amount: "200.20", expandable: true },
  { label: "Self-Pay", amount: "0.00" },
  { label: "Bad Debt", amount: "0.00" },
  { label: "Outstanding", amount: "200.20" },
];

const events = [
  { title: "ROC Request-Demographic Update Needed", detail: "The f...", icon: <PersonIcon />, urgent: false },
  { title: "Demo Update", detail: "The following Demographic update...", icon: <StickyIcon />, urgent: true },
];

/* ---------- sections ---------- */

const SidebarPanel = () => (
  <Sidebar>
    <AvatarRow>
      <Avatar><AvatarArt /></Avatar>
      <NoPhoto aria-label="Photo options"><NoMonitorIcon /></NoPhoto>
    </AvatarRow>
    <PersonName>Bella Zindel</PersonName>
    <PersonFacts>
      <div>27 years, 2/26/1994</div>
      <div><Muted>Guar ID:</Muted> 14024</div>
      <div>Personal/Family</div>
      <div>Modern Dentistry Service Area</div>
      <Flagged>
        Demographic Update Needed
        <Callout $inset="-5px 4px -5px 1px" />
      </Flagged>
      <div><Muted>Office #:</Muted> None</div>
    </PersonFacts>
    <Divider $top={7} $bottom={12} />
    <ActionTile $tone="green"><TileCaption>EXPLORE PAYMENT OPTIONS</TileCaption>ZINDEL,BELLA</ActionTile>
    <Divider $top={6} $bottom={8} />
    <ActionTile $tone="cream"><TileCaption>PAYMENT SOLUTIONS HUB</TileCaption>ZINDEL,BELLA</ActionTile>
    <Divider $top={7} $bottom={7} />
    <ContactRow><HouseIcon />555-123-4567</ContactRow>
    <ContactRow><MailAtIcon />email@email.com</ContactRow>
    <Divider $top={8} $bottom={10} />
    <CoverageBadge><CopiesIcon color="#ea8a12" /></CoverageBadge>
    <ContactRow><Muted>Coverage Details:</Muted> None</ContactRow>
    <ContactRow>None</ContactRow>
    <Divider $top={7} $bottom={10} />
    <SideHeading>PROFESSIONAL BALANCES</SideHeading>
    <SideBalances>
      <SideTotal>Total<strong>200.20</strong></SideTotal>
      <SideLines>
        <dt>Undist:</dt><dd>0.00</dd>
        <dt>Ins:</dt><dd>200.20</dd>
        <dt>SP:</dt><dd>0.00</dd>
      </SideLines>
    </SideBalances>
    <Divider $top={9} $bottom={0} />
  </Sidebar>
);

const ToolbarPanel = () => (
  <Toolbar role="toolbar">
    <ToolIcon aria-label="Refresh"><RefreshIcon /></ToolIcon>
    <ToolIcon aria-label="Back"><ArrowIcon /></ToolIcon>
    <ToolIcon aria-label="Forward"><ArrowIcon flip /></ToolIcon>
    <ToolButton $gap={5}><ListIcon /><ListLabel><u>L</u>ist</ListLabel><CaretIcon /></ToolButton>
    <ToolButton><NotifyIcon /><span>Guarantor Ac<u>t</u>ivities</span></ToolButton>
    <ToolButton $gap={5}><NoteIcon /><span>Vie<u>w</u> Notes</span></ToolButton>
    <ToolButton><AddNoteIcon /><span>Add N<u>o</u>te</span></ToolButton>
    <ToolRule />
    <ToolButton $gap={6}><JumpIcon color={slate} size={8} /><span><u>G</u>o To</span><CaretIcon /></ToolButton>
    <ToolButton><CheckIcon /><span><u>F</u>inish</span></ToolButton>
    <ToolButton><DocSearchIcon lens="#2874a8" /><span>Dental Eligibility</span></ToolButton>
    <ToolButton><DocsIcon /><span>Guarantor Docs</span></ToolButton>
    <ToolRule />
    <ToolButton><FindIcon /><span>Find</span></ToolButton>
  </Toolbar>
);

const DemographicsCard = () => (
  <Card $tone="blue">
    <CardHead><CardTitle $tone="blue"><IdCardIcon />Guarantor Demographics</CardTitle></CardHead>
    <CardBody $bottom={12}>
      <AccountLine><strong>ZINDEL, BELLA</strong><Grey>[14024] (P/F) Modern Dentistry Service Area</Grey></AccountLine>
      <FactGrid>
        <FactList>
          <Fact>
            <CakeIcon />
            <div>
              <div>02/26/1994, 27 years</div>
              <div>Female <Grey>(Legal sex)</Grey></div>
              <div>xxx-xx-4861 <Grey>(SSN)</Grey></div>
            </div>
          </Fact>
          <Fact>
            <HouseIcon />
            <div>
              <div>21564 Northstart Rd</div>
              <div>FOOTHILL RANCH CA 92610</div>
            </div>
          </Fact>
        </FactList>
        <FactList>
          <Fact><PhoneIcon /><div>555-123-4567 <Grey>(Home)</Grey></div></Fact>
          <Fact><MailAtIcon /><div>email@email.com <Grey>(Patient)</Grey></div></Fact>
        </FactList>
      </FactGrid>
    </CardBody>
  </Card>
);

const OverviewCard = () => (
  <Card $tone="blue">
    <CardHead><CardTitle $tone="blue"><DocSearchIcon color="#0e55d0" />Guarantor Overview</CardTitle></CardHead>
    <CardBody $bottom={14}>
      <Preference><NotifyIcon />Does not receive billing notifications. <JumpLink href="#preferences">Manage preferences<JumpIcon /></JumpLink></Preference>
      <AlertsBlock>
        <AlertsTitle>Alerts</AlertsTitle>
        <AlertItem><InfoIcon />Demographic Update Needed</AlertItem>
        <Callout $inset="-5px auto -8px -6px" $width="216px" />
      </AlertsBlock>
    </CardBody>
  </Card>
);

const BalancesCard = () => (
  <Card $tone="green">
    <CardHead><CardTitle $tone="green"><CashStackIcon />Balances</CardTitle></CardHead>
    <CardBody $bottom={0}>
      <BalanceTable>
        <thead><tr><th>Balance Type</th><th>Professional</th><td /></tr></thead>
        <tbody>
          {balances.map((b) => (
            <tr key={b.label}>
              <th scope="row">{b.label}</th>
              <td>{b.amount}</td>
              <td>{b.expandable && <button aria-label={`Expand ${b.label}`}><ChevronsIcon /></button>}</td>
            </tr>
          ))}
        </tbody>
      </BalanceTable>
      <Totals>
        <div><dt>Insurance</dt><dd>200.20</dd></div>
        <div><dt>Self-Pay</dt><dd>0.00</dd></div>
      </Totals>
    </CardBody>
  </Card>
);

const HistoryCard = () => (
  <Card $tone="royal" $grow>
    <CardHead><CardTitle $tone="royal"><HistoryIcon />Recent History</CardTitle></CardHead>
    <CardBody $bottom={0}>
      <HistoryNote><Grey>Showing the last 20 notable events within 3 months.</Grey><JumpLink href="#history">See more history<JumpIcon /></JumpLink></HistoryNote>
      <ExpandRow><ExpandButton><ChevronsIcon />Expand All</ExpandButton></ExpandRow>
      <DayHeading>Today</DayHeading>
      <EventList>
        {events.map((e) => (
          <EventRow key={e.title}>
            <EventFlag>{e.urgent && <ExclaimIcon />}</EventFlag>
            <EventTime>02:02 PM</EventTime>
            <EventIcon>{e.icon}</EventIcon>
            <EventTitle>{e.title}</EventTitle>
            <EventDetail>{e.detail}</EventDetail>
            <EventUser>Roc User, Epic</EventUser>
            <button aria-label={`Expand ${e.title}`}><ChevronsIcon /></button>
          </EventRow>
        ))}
        <Callout as="li" $inset="-6px -12px -4px -7px" />
      </EventList>
    </CardBody>
  </Card>
);

export default function App() {
  return (
    <>
      <GlobalStyle />
      <Shell>
        <TopBar>
          <EdgeSliver />
          <AppTab aria-label="Dashboard"><ChartIcon /></AppTab>
          <AppTab aria-label="Coverages"><CopiesIcon /></AppTab>
          <AppTab aria-label="In Basket"><InboxIcon /></AppTab>
          <PersonTab>
            <GuarantorIcon />
            Zindel, Bella
            <CloseButton aria-label="Close tab">
              <svg width="11" height="11" viewBox="0 0 11 11" stroke="#45c9a6" strokeWidth="1.8"><path d="m1 1 9 9M10 1l-9 9" /></svg>
            </CloseButton>
          </PersonTab>
          <TopFill><BambooArt /></TopFill>
        </TopBar>
        <Body>
          <SidebarPanel />
          <Main>
            <TabStrip>
              <StripArt />
              <BigTabs>
                {bigTabs.map((t) => (
                  <BigTab key={t.label} $color={t.color} $width={t.width} $active={t.active}>{t.icon}{t.label}</BigTab>
                ))}
              </BigTabs>
              <SmallTabs>
                {smallTabs.map((t) => (
                  <SmallTab key={t.label} $width={t.width}>{t.label}</SmallTab>
                ))}
              </SmallTabs>
              <TabSpacer />
              <ToolTab aria-label="Customize tabs"><WrenchIcon /></ToolTab>
            </TabStrip>
            <Page>
              <PageHead><PageTitle>Summary - 1 of 1 Guarantors</PageTitle><button aria-label="More"><MoreIcon /></button></PageHead>
              <ToolbarPanel />
              <Columns>
                <Column>
                  <DemographicsCard />
                  <OverviewCard />
                  <Pair>
                    <Card $tone="green">
                      <CardHead><CardTitle $tone="green" $compact><StatementIcon />Last Statement</CardTitle></CardHead>
                      <Centered>
                        <BagLine><BagIcon /></BagLine>
                        <StatusLine $warn><WarningIcon />Next PB statement on 1/16/1842</StatusLine>
                        <JumpLink href="#statements">See more statements<JumpIcon /></JumpLink>
                      </Centered>
                    </Card>
                    <Card $tone="green">
                      <CardHead><CardTitle $tone="green" $compact><CashIcon />Last Payment</CardTitle><button aria-label="Payment details"><InfoIcon /></button></CardHead>
                      <Centered>
                        <BagLine><BagIcon /></BagLine>
                        <StatusLine>No PB payments made</StatusLine>
                        <JumpLink href="#payments">See more payments<JumpIcon /></JumpLink>
                      </Centered>
                    </Card>
                  </Pair>
                </Column>
                <Column>
                  <BalancesCard />
                  <HistoryCard />
                </Column>
              </Columns>
            </Page>
          </Main>
        </Body>
      </Shell>
    </>
  );
}
